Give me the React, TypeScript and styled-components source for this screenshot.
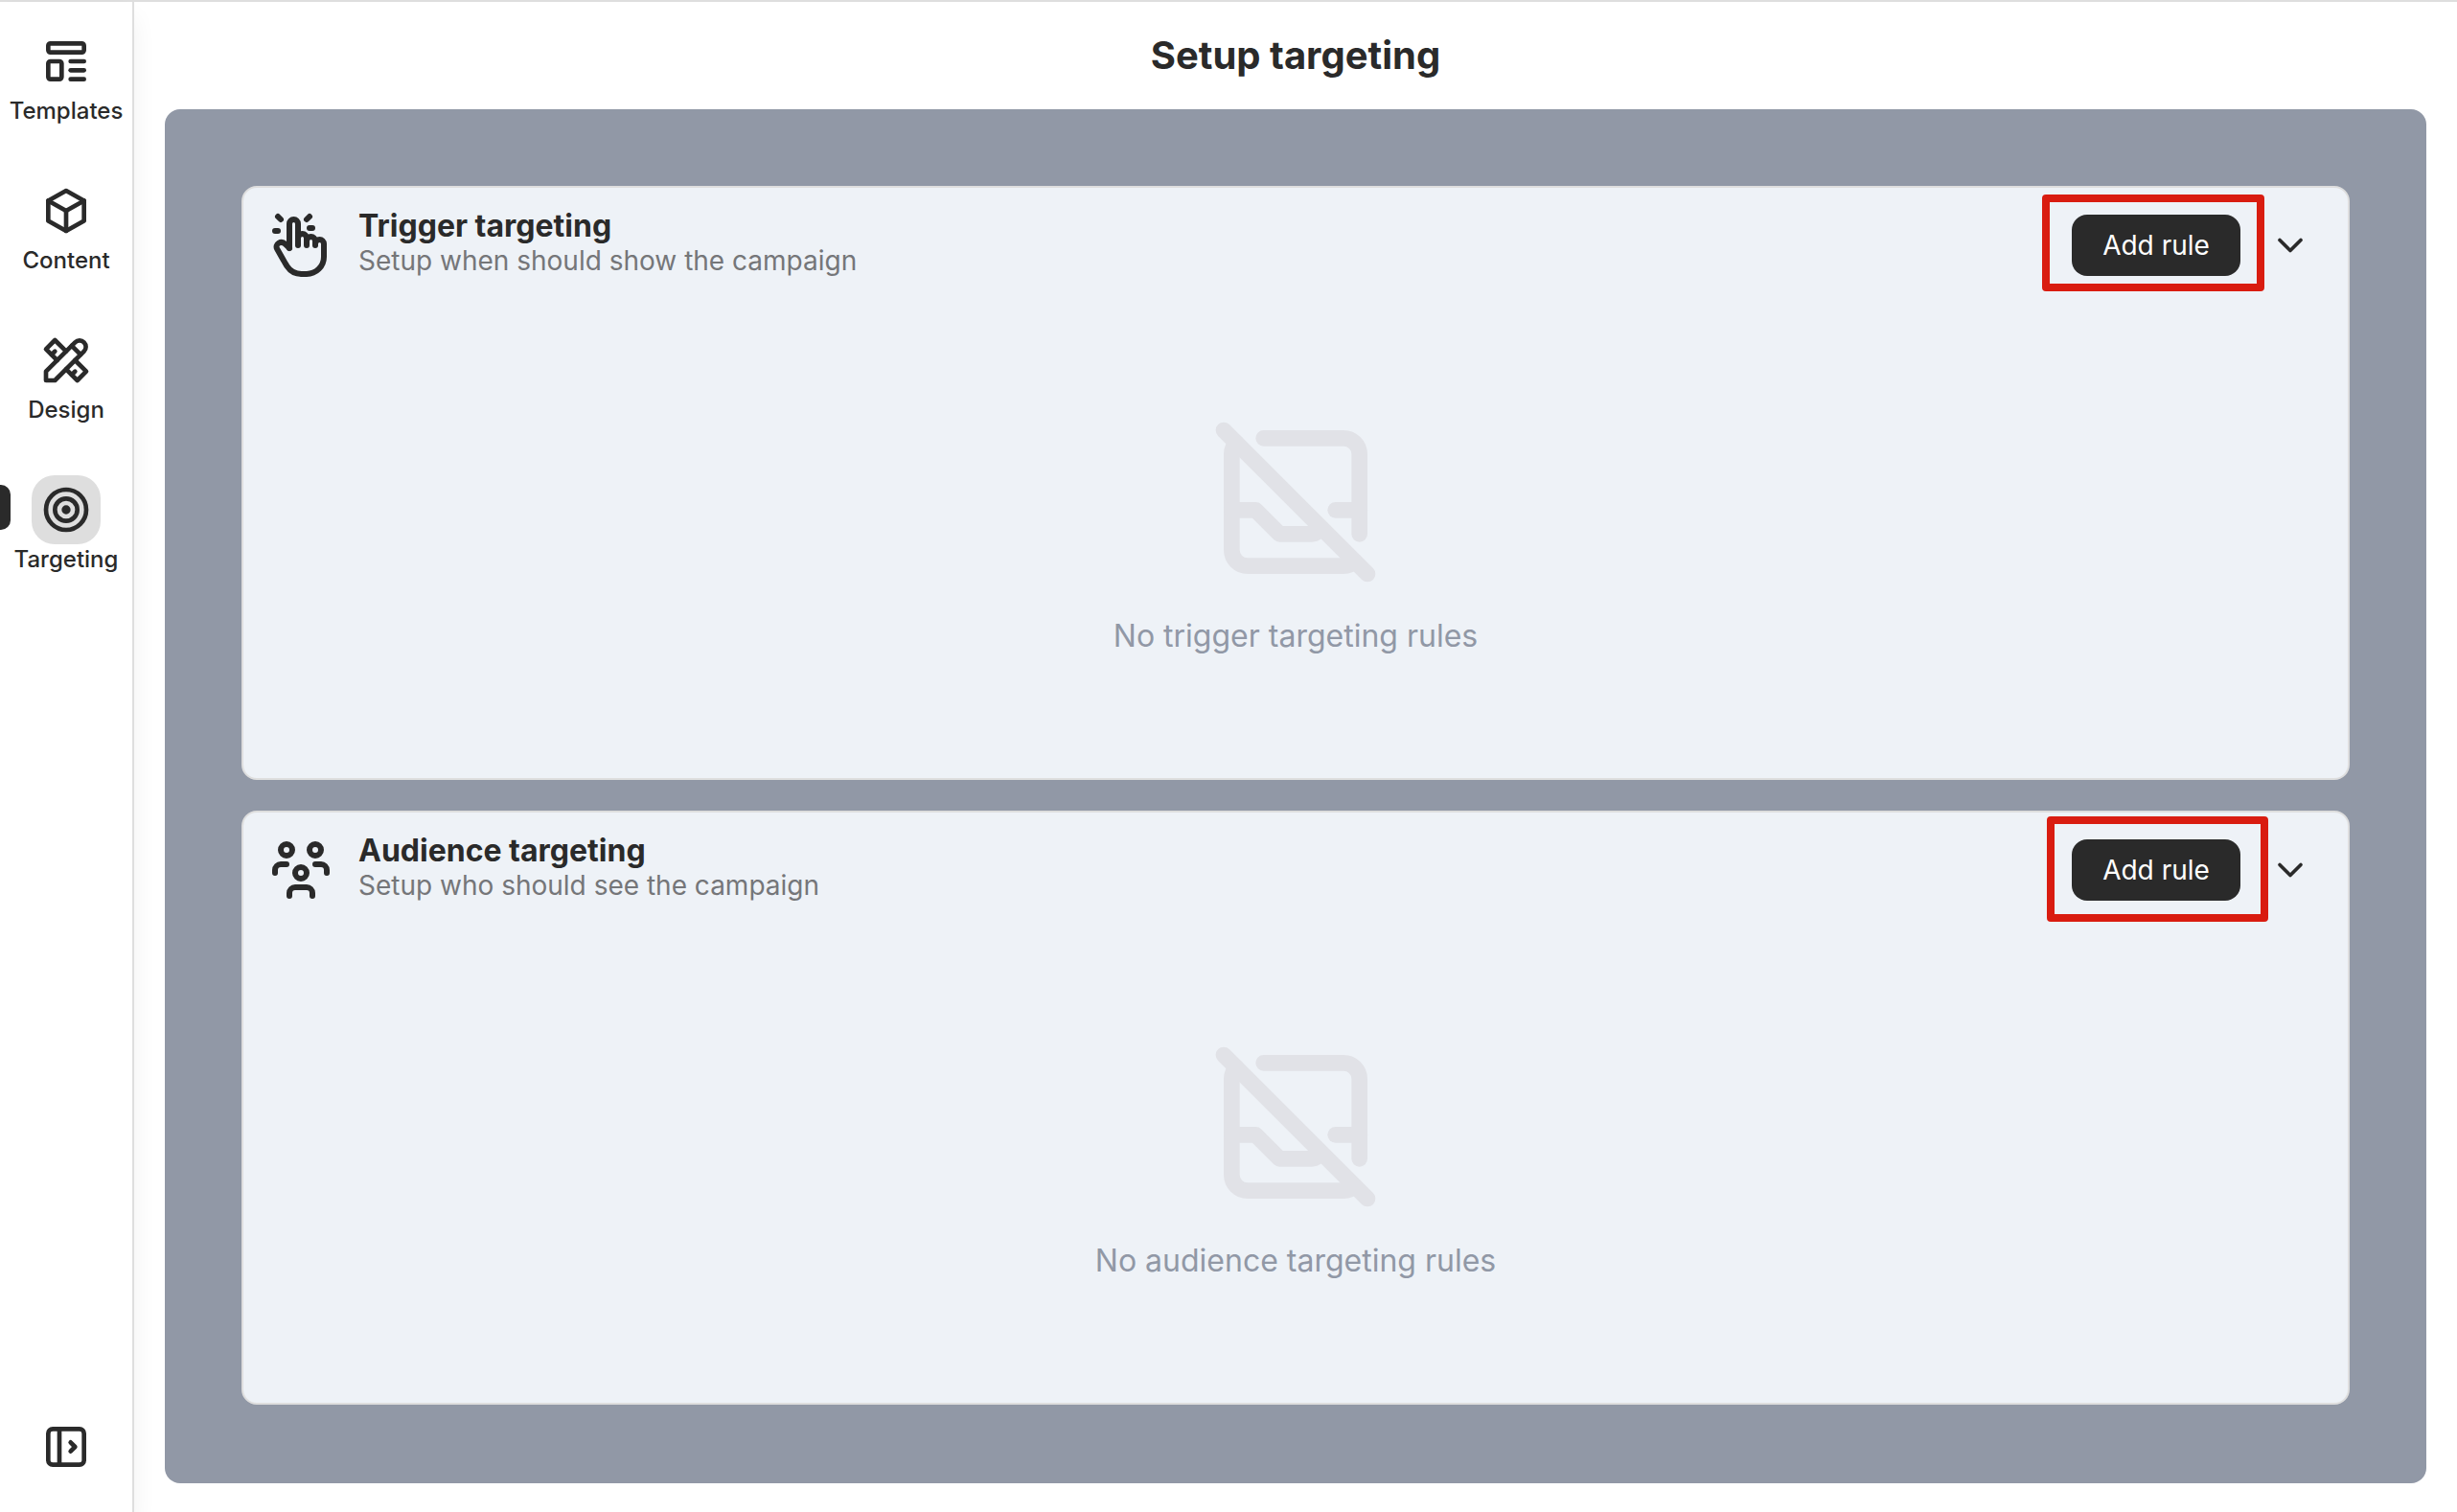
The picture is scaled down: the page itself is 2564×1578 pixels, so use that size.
import React, { useState } from "react";
import styled, { createGlobalStyle } from "styled-components";

const color = {
  ink: "#2a2a2a",
  muted: "#757679",
  slate: "#9198a6",
  line: "#dedede",
  card: "#eef2f7",
  ghost: "#e1e2e7",
  mark: "#d91c10",
};

const GlobalStyle = createGlobalStyle`
  *, *::before, *::after { box-sizing: border-box; }
  body {
    margin: 0;
    background: #fff;
    color: ${color.ink};
    font-family: Inter, "Liberation Sans", sans-serif;
  }
  button { font-family: inherit; color: inherit; }
`;

const Page = styled.div`
  display: flex;
  min-height: 100vh;
  border-top: 2px solid ${color.line};
`;

const Sidebar = styled.nav`
  position: relative;
  z-index: 1;
  display: flex;
  flex: none;
  flex-direction: column;
  align-items: stretch;
  justify-content: space-between;
  width: 140px;
  padding: 26px 0 32px;
  border-right: 2px solid ${color.line};
  background: #fff;
  box-shadow: 0 16px 24px rgba(0, 0, 0, 0.06);
`;

const NavList = styled.ul`
  display: flex;
  flex-direction: column;
  gap: 52px;
  margin: 0;
  padding: 0;
  list-style: none;
`;

const NavItem = styled.li`
  position: relative;
`;

const NavButton = styled.button`
  display: flex;
  flex-direction: column;
  align-items: center;
  width: 100%;
  padding: 0;
  border: 0;
  background: none;
  font-size: 24px;
  font-weight: 500;
  line-height: 32px;
  cursor: pointer;
`;

const NavIcon = styled.span<{ $active: boolean }>`
  display: flex;
  padding: 8px;
  border-radius: 24px;
  background: ${(p) => (p.$active ? color.line : "transparent")};
`;

const ActiveMarker = styled.span`
  position: absolute;
  left: 0;
  top: 10px;
  width: 11px;
  height: 47px;
  border-radius: 0 10px 10px 0;
  background: ${color.ink};
`;

const ExpandButton = styled.button`
  display: flex;
  align-self: center;
  padding: 8px;
  border: 0;
  background: none;
  cursor: pointer;
`;

const Main = styled.main`
  display: flex;
  flex: 1;
  flex-direction: column;
  min-width: 0;
  padding: 0 32px 30px;
`;

const PageTitle = styled.h1`
  margin: 0;
  padding: 32px 0;
  font-size: 40px;
  font-weight: 700;
  line-height: 48px;
  text-align: center;
`;

const Panel = styled.div`
  display: flex;
  flex: 1;
  flex-direction: column;
  gap: 32px;
  padding: 80px;
  border-radius: 16px;
  background: ${color.slate};
`;

const Card = styled.section`
  border: 2px solid ${color.line};
  border-radius: 16px;
  background: ${color.card};
`;

const CardHeader = styled.header`
  display: flex;
  align-items: center;
  gap: 24px;
  padding: 24px;
`;

const CardText = styled.div`
  flex: 1;
`;

const CardTitle = styled.h2`
  margin: 0;
  font-size: 32px;
  font-weight: 700;
  line-height: 32px;
`;

const CardSubtitle = styled.p`
  margin: 0;
  color: ${color.muted};
  font-size: 28px;
  line-height: 40px;
`;

const Actions = styled.div`
  display: flex;
  align-items: center;
  gap: 16px;
`;

const Highlighted = styled.div`
  position: relative;
`;

const HighlightFrame = styled.span<{ $inset: string }>`
  position: absolute;
  inset: ${(p) => p.$inset};
  border: 8px solid ${color.mark};
  border-radius: 4px;
  pointer-events: none;
`;

const AddButton = styled.button`
  display: block;
  width: 176px;
  height: 64px;
  padding: 0;
  border: 0;
  border-radius: 16px;
  background: ${color.ink};
  color: #fff;
  font-size: 28px;
  line-height: 36px;
  cursor: pointer;
`;

const ToggleButton = styled.button`
  display: flex;
  padding: 14px;
  border: 0;
  background: none;
  cursor: pointer;
`;

const EmptyState = styled.div`
  display: flex;
  flex-direction: column;
  align-items: center;
  gap: 16px;
  padding: 108px 24px 124px;
  color: ${color.ghost};
`;

const EmptyText = styled.p`
  margin: 0;
  color: ${color.slate};
  font-size: 32px;
  line-height: 48px;
`;

const Svg = styled.svg`
  display: block;
  flex: none;
  fill: none;
  stroke: currentColor;
  stroke-width: 2;
  stroke-linecap: round;
  stroke-linejoin: round;
`;

const shapes = {
  template: [
    "M5 4h14a1 1 0 0 1 1 1v2a1 1 0 0 1 -1 1h-14a1 1 0 0 1 -1 -1v-2a1 1 0 0 1 1 -1z",
    "M5 12h4a1 1 0 0 1 1 1v6a1 1 0 0 1 -1 1h-4a1 1 0 0 1 -1 -1v-6a1 1 0 0 1 1 -1z",
    "M14 12h6",
    "M14 16h6",
    "M14 20h6",
  ],
  box: ["M12 3l8 4.5v9l-8 4.5l-8 -4.5v-9z", "M12 12l8 -4.5", "M12 12v9", "M12 12l-8 -4.5"],
  tools: [
    "M3 21h4l13 -13a1.5 1.5 0 0 0 -4 -4l-13 13v4",
    "M14.5 5.5l4 4",
    "M12 8l-5 -5l-4 4l5 5",
    "M7 8l-1.5 1.5",
    "M16 12l5 5l-4 4l-5 -5",
    "M16 17l-1.5 1.5",
  ],
  target: [
    "M11 12a1 1 0 1 0 2 0a1 1 0 1 0 -2 0",
    "M7 12a5 5 0 1 0 10 0a5 5 0 1 0 -10 0",
    "M3 12a9 9 0 1 0 18 0a9 9 0 1 0 -18 0",
  ],
  sidebarExpand: [
    "M6 4h12a2 2 0 0 1 2 2v12a2 2 0 0 1 -2 2h-12a2 2 0 0 1 -2 -2v-12a2 2 0 0 1 2 -2z",
    "M9 4v16",
    "M14 10l2 2l-2 2",
  ],
  handClick: [
    "M8 13v-8.5a1.5 1.5 0 0 1 3 0v7.5",
    "M11 11.5v-2a1.5 1.5 0 0 1 3 0v2.5",
    "M14 10.5a1.5 1.5 0 0 1 3 0v1.5",
    "M17 11.5a1.5 1.5 0 0 1 3 0v4.5a6 6 0 0 1 -6 6h-2h.208a6 6 0 0 1 -5.012 -2.7l-.196 -.3c-.312 -.479 -1.407 -2.388 -3.286 -5.728a1.5 1.5 0 0 1 .536 -2.022a1.867 1.867 0 0 1 2.28 .28l1.47 1.47",
    "M5 3l-1 -1",
    "M4 7h-1",
    "M14 3l1 -1",
    "M15 6h1",
  ],
  usersGroup: [
    "M10 13a2 2 0 1 0 4 0a2 2 0 0 0 -4 0",
    "M8 21v-1a2 2 0 0 1 2 -2h4a2 2 0 0 1 2 2v1",
    "M15 5a2 2 0 1 0 4 0a2 2 0 0 0 -4 0",
    "M17 10h2a2 2 0 0 1 2 2v1",
    "M5 5a2 2 0 1 0 4 0a2 2 0 0 0 -4 0",
    "M3 13v-1a2 2 0 0 1 2 -2h2",
  ],
  inboxOff: [
    "M8 4h10a2 2 0 0 1 2 2v10m-.593 3.422a1.994 1.994 0 0 1 -1.407 .578h-12a2 2 0 0 1 -2 -2v-12c0 -.554 .225 -1.056 .588 -1.418",
    "M4 13h3l3 3h4a.987 .987 0 0 0 .701 -.291",
    "M17 13h3",
    "M3 3l18 18",
  ],
  chevronDown: ["M6 9l6 6l6 -6"],
};

type IconName = keyof typeof shapes;

function Icon({ name, size }: { name: IconName; size: number }) {
  return (
    <Svg width={size} height={size} viewBox="0 0 24 24" aria-hidden="true">
      {shapes[name].map((d) => (
        <path key={d} d={d} />
      ))}
    </Svg>
  );
}

const navItems: { label: string; icon: IconName }[] = [
  { label: "Templates", icon: "template" },
  { label: "Content", icon: "box" },
  { label: "Design", icon: "tools" },
  { label: "Targeting", icon: "target" },
];

interface TargetingCardProps {
  icon: IconName;
  title: string;
  subtitle: string;
  empty: string;
  frameInset: string;
}

const cards: TargetingCardProps[] = [
  {
    icon: "handClick",
    title: "Trigger targeting",
    subtitle: "Setup when should show the campaign",
    empty: "No trigger targeting rules",
    frameInset: "-21px -25px -16px -31px",
  },
  {
    icon: "usersGroup",
    title: "Audience targeting",
    subtitle: "Setup who should see the campaign",
    empty: "No audience targeting rules",
    frameInset: "-24px -29px -22px -26px",
  },
];

function TargetingCard({ icon, title, subtitle, empty, frameInset }: TargetingCardProps) {
  const [open, setOpen] = useState(true);
  return (
    <Card>
      <CardHeader>
        <Icon name={icon} size={72} />
        <CardText>
          <CardTitle>{title}</CardTitle>
          <CardSubtitle>{subtitle}</CardSubtitle>
        </CardText>
        <Actions>
          <Highlighted>
            <AddButton type="button">Add rule</AddButton>
            <HighlightFrame $inset={frameInset} />
          </Highlighted>
          <ToggleButton
            type="button"
            aria-label={`Toggle ${title}`}
            aria-expanded={open}
            onClick={() => setOpen(!open)}
          >
            <Icon name="chevronDown" size={44} />
          </ToggleButton>
        </Actions>
      </CardHeader>
      {open && (
        <EmptyState>
          <Icon name="inboxOff" size={200} />
          <EmptyText>{empty}</EmptyText>
        </EmptyState>
      )}
    </Card>
  );
}

export default function App() {
  const [active, setActive] = useState("Targeting");
  return (
    <>
      <GlobalStyle />
      <Page>
        <Sidebar>
          <NavList>
            {navItems.map((item) => (
              <NavItem key={item.label}>
                {item.label === active && <ActiveMarker />}
                <NavButton type="button" onClick={() => setActive(item.label)}>
                  <NavIcon $active={item.label === active}>
                    <Icon name={item.icon} size={56} />
                  </NavIcon>
                  {item.label}
                </NavButton>
              </NavItem>
            ))}
          </NavList>
          <ExpandButton type="button" aria-label="Expand sidebar">
            <Icon name="sidebarExpand" size={56} />
          </ExpandButton>
        </Sidebar>
        <Main>
          <PageTitle>Setup targeting</PageTitle>
          <Panel>
            {cards.map((card) => (
              <TargetingCard key={card.title} {...card} />
            ))}
          </Panel>
        </Main>
      </Page>
    </>
  );
}
